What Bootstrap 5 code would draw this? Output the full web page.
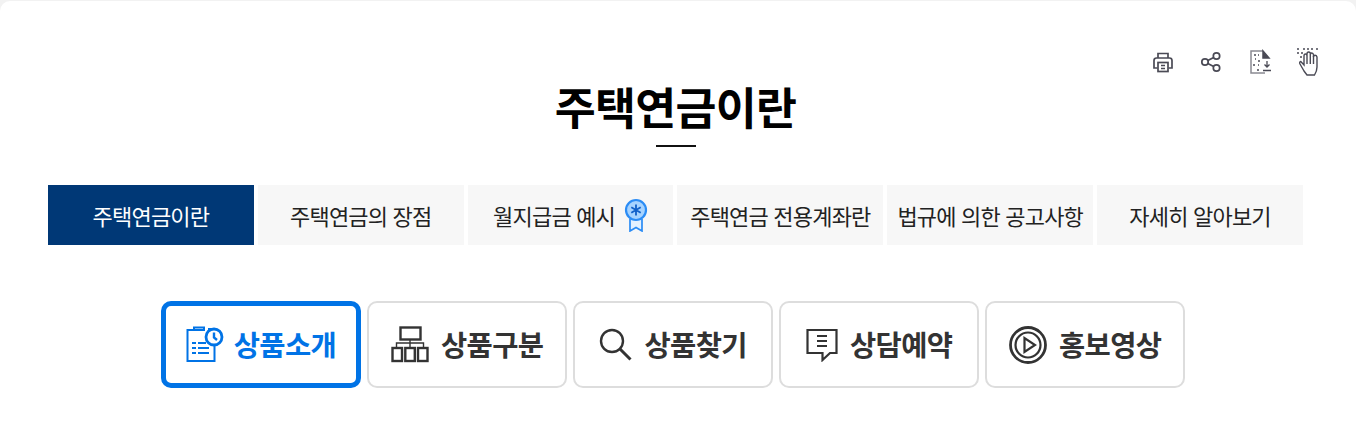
<!DOCTYPE html>
<html lang="ko">
<head>
  <meta charset="UTF-8">
  <meta name="viewport" content="width=device-width, initial-scale=1.0">
  <title>주택연금이란</title>
  <link href="https://cdn.jsdelivr.net/npm/bootstrap@5.3.0/dist/css/bootstrap.min.css" rel="stylesheet">
  <style>
    body {
      background: #f2f2f2;
      font-family: "Noto Sans CJK KR", "Noto Sans", sans-serif;
      overflow: hidden;
    }
    .page-box {
      background: #fff;
      margin-top: 1px;
      border-radius: 10px 10px 0 0;
      height: 434px;
      padding: 44px 53px 0 48px;
    }
    .tool-row {
      gap: 24.500px;
      height: 34px;
      margin-right: -17px;
    }
    .tool-row svg {
      display: block;
    }
    .page-title {
      font-size: 44.500px;
      font-weight: 700;
      color: #000;
      letter-spacing: -0.7px;
      line-height: 58px;
      margin: -2px 0 0;
      text-align: center;
    }
    .title-rule {
      width: 40px;
      height: 2px;
      background: #111;
      margin: 10px auto 0;
    }
    .tab-row {
      gap: 4px;
      margin-top: 38px;
    }
    .tab-item {
      flex: 1 1 0;
      height: 60px;
      background: #f7f7f7;
      color: #222;
      font-size: 22px;
      letter-spacing: -0.8px;
      text-decoration: none;
      gap: 9px;
    }
    .tab-item.on {
      background: #003876;
      color: #fff;
    }
    .quick-row {
      gap: 6px;
      margin-top: 56px;
      margin-left: 113px;
    }
    .quick-btn {
      width: 200px;
      height: 87px;
      background: #fff;
      border: 2px solid #ddd;
      border-radius: 10px;
      color: #333;
      font-size: 28.500px;
      font-weight: 700;
      letter-spacing: -0.6px;
      text-decoration: none;
      gap: 12.500px;
    }
    .quick-btn.on {
      border: 5px solid #0073e6;
      color: #0073e6;
      gap: 10px;
    }
  </style>
</head>
<body>
  <div class="page-box">
    <div class="d-flex justify-content-end align-items-center tool-row">
      <!-- 인쇄 -->
      <svg width="24" height="24" viewBox="0 0 24 24" fill="none" stroke="#4a4a55" stroke-width="1.700">
        <path d="M7 8V3.500h10V8"/>
        <path d="M6.500 18H3V10.500Q3 8 5.500 8h13q2.500 0 2.500 2.500V18h-3.500"/>
        <rect x="7" y="12.500" width="10" height="9"/>
        <path d="M10 15.500h4M10 18.500h4"/>
      </svg>
      <!-- 공유 -->
      <svg width="24" height="24" viewBox="0 0 24 24" fill="none" stroke="#4a4a55" stroke-width="1.700">
        <circle cx="6" cy="12" r="3.200"/>
        <circle cx="17.500" cy="6" r="3.200"/>
        <circle cx="17.500" cy="18" r="3.200"/>
        <path d="M8.800 10.500l5.900-3M8.800 13.500l5.900 3"/>
      </svg>
      <!-- 파일 저장 -->
      <svg width="24" height="26" viewBox="0 0 24 26" fill="none" stroke="#4a4a55" stroke-width="1.500">
        <path d="M15 2H3v22h14" stroke="#8a8a92"/>
        <path d="M15 2l6 7h-6z" fill="#4a4a55"/>
        <path d="M6 6h2M10 6h1M7 10h1M10 12h2M5 16h2M10 16h1M9 21h2" stroke-width="1.600"/>
        <path d="M19 12v6M16.500 15.500l2.500 2.500 2.500-2.500M15 21.500h8" stroke-width="1.300"/>
      </svg>
      <!-- 수어 -->
      <svg width="24" height="30" viewBox="0 0 24 30" fill="none" stroke="#4a4a55" stroke-width="1.400">
        <path d="M1 2h2M7 2h2M11 2h2M15 2h2M20 2h2M1 6h2M5 6h2M4 10h2"/>
        <path d="M8 24L4 17q-1-2 .8-2.500L8 18V9q0-2 1.500-2T11 9V7q0-2 1.700-2t1.600 2v1q0-2 1.500-2t1.700 2v2q0-1.700 1.500-1.700T21 10v10q0 4-2.500 8H11z"/>
        <path d="M11 9v8M14.300 8v9M17.500 9v8"/>
      </svg>
    </div>

    <h1 class="page-title">주택연금이란</h1>
    <div class="title-rule"></div>

    <div class="d-flex tab-row">
      <a href="#" class="tab-item on d-flex align-items-center justify-content-center">주택연금이란</a>
      <a href="#" class="tab-item d-flex align-items-center justify-content-center">주택연금의 장점</a>
      <a href="#" class="tab-item d-flex align-items-center justify-content-center">월지급금 예시
        <svg width="24" height="34" viewBox="0 0 24 34" fill="none">
          <path d="M6 21v12l6-3.500 6 3.500V21" fill="#e4f1ff" stroke="#2b8cf5" stroke-width="1.700"/>
          <circle cx="12" cy="12" r="10" fill="#a6d3ff" stroke="#2b8cf5" stroke-width="2.200"/>
          <path d="M12 6.500v11M7.300 9.200l9.400 5.600M16.700 9.200l-9.400 5.600" stroke="#0f5fc8" stroke-width="1.800"/>
        </svg>
      </a>
      <a href="#" class="tab-item d-flex align-items-center justify-content-center">주택연금 전용계좌란</a>
      <a href="#" class="tab-item d-flex align-items-center justify-content-center">법규에 의한 공고사항</a>
      <a href="#" class="tab-item d-flex align-items-center justify-content-center">자세히 알아보기</a>
    </div>

    <div class="d-flex quick-row">
      <a href="#" class="quick-btn on d-flex align-items-center justify-content-center">
        <svg width="38" height="37" viewBox="0 0 38 37" fill="none" stroke="#0073e6" stroke-width="2">
          <path d="M19 4H1.500v31h27V20"/>
          <path d="M8 4V1.500h10V4M22 3h5"/>
          <path d="M6 17h4M12 17h8M6 22h4M12 22h11M6 27h4M12 27h11" stroke-width="2.200"/>
          <circle cx="28" cy="11" r="8" stroke-width="2.800"/>
          <path d="M28 6.500v5l3 2.500" stroke-width="2.400"/>
        </svg>
        상품소개
      </a>
      <a href="#" class="quick-btn d-flex align-items-center justify-content-center">
        <svg width="38" height="37" viewBox="0 0 38 37" fill="none" stroke="#333" stroke-width="2.400">
          <rect x="9.500" y="1.500" width="20" height="12"/>
          <path d="M19 13.500v3.500M5.500 21v-4h27v4M19 17v4" stroke-width="1.400"/>
          <rect x="1.500" y="22" width="9.500" height="13"/>
          <rect x="14.300" y="22" width="9.500" height="13"/>
          <rect x="27" y="22" width="9.500" height="13"/>
        </svg>
        상품구분
      </a>
      <a href="#" class="quick-btn d-flex align-items-center justify-content-center">
        <svg width="33" height="33" viewBox="0 0 33 33" fill="none" stroke="#333" stroke-width="2.400">
          <circle cx="13" cy="13" r="11"/>
          <path d="M21 21l10.500 10.500" stroke-width="3"/>
        </svg>
        상품찾기
      </a>
      <a href="#" class="quick-btn d-flex align-items-center justify-content-center">
        <svg width="32" height="34" viewBox="0 0 32 34" fill="none" stroke="#333" stroke-width="2.200">
          <path d="M1.500 2h29v23H24l-7.500 7v-7H1.500z"/>
          <path d="M11 8h10M11 13h10M11 18h10"/>
        </svg>
        상담예약
      </a>
      <a href="#" class="quick-btn d-flex align-items-center justify-content-center">
        <svg width="38" height="38" viewBox="0 0 38 38" fill="none" stroke="#333" stroke-width="2.800">
          <circle cx="19" cy="19" r="17.500"/>
          <circle cx="19" cy="19" r="12.500" stroke-width="2.200"/>
          <path d="M15.500 12v14l10.500-7z" stroke-width="2.200"/>
        </svg>
        홍보영상
      </a>
    </div>
  </div>

  <script src="https://cdn.jsdelivr.net/npm/bootstrap@5.3.0/dist/js/bootstrap.bundle.min.js"></script>
</body>
</html>
